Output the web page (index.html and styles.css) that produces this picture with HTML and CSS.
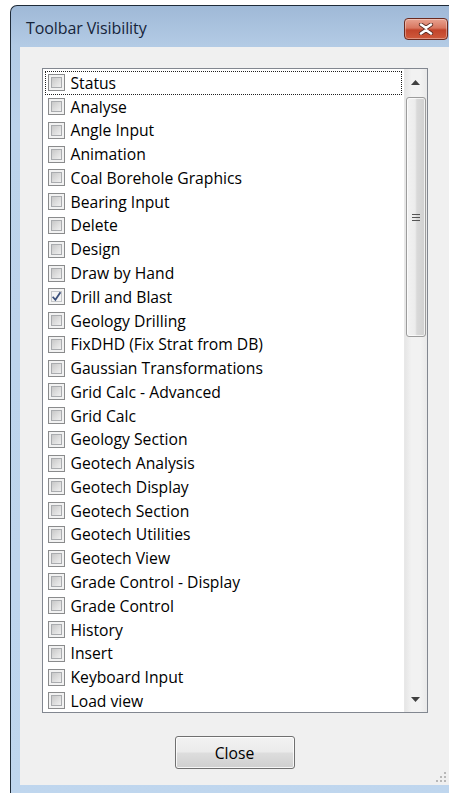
FILE: index.html
```html
<!DOCTYPE html>
<html lang="en">
<head>
<meta charset="utf-8">
<title>Toolbar Visibility</title>
<link rel="stylesheet" href="styles.css">
</head>
<body>
<div class="window">
  <div class="titlebar">
    <span class="title">Toolbar Visibility</span>
    <button class="close-x" aria-label="Close">
      <svg width="20" height="12" viewBox="0 0 20 12">
        <path d="M5 1.5 L10 5 L15 1.5 M5 10.5 L10 7 L15 10.5" fill="none" stroke="#5a2a22" stroke-width="4.2" stroke-linecap="round"/>
        <path d="M5 1.5 L10 5 L15 1.5 M5 10.5 L10 7 L15 10.5" fill="none" stroke="#ffffff" stroke-width="2.6" stroke-linecap="round"/>
      </svg>
    </button>
  </div>
  <div class="client">
    <div class="listbox">
      <ul class="items">
        <li class="item focus"><span class="check"></span>Status</li>
        <li class="item"><span class="check"></span>Analyse</li>
        <li class="item"><span class="check"></span>Angle Input</li>
        <li class="item"><span class="check"></span>Animation</li>
        <li class="item"><span class="check"></span>Coal Borehole Graphics</li>
        <li class="item"><span class="check"></span>Bearing Input</li>
        <li class="item"><span class="check"></span>Delete</li>
        <li class="item"><span class="check"></span>Design</li>
        <li class="item"><span class="check"></span>Draw by Hand</li>
        <li class="item"><span class="check checked"><svg width="11" height="11" viewBox="0 0 10 10"><path d="M1.5 5.2 L4 8 L8.6 1.2" fill="none" stroke="#3b4f7a" stroke-width="1.6"/></svg></span>Drill and Blast</li>
        <li class="item"><span class="check"></span>Geology Drilling</li>
        <li class="item"><span class="check"></span>FixDHD (Fix Strat from DB)</li>
        <li class="item"><span class="check"></span>Gaussian Transformations</li>
        <li class="item"><span class="check"></span>Grid Calc - Advanced</li>
        <li class="item"><span class="check"></span>Grid Calc</li>
        <li class="item"><span class="check"></span>Geology Section</li>
        <li class="item"><span class="check"></span>Geotech Analysis</li>
        <li class="item"><span class="check"></span>Geotech Display</li>
        <li class="item"><span class="check"></span>Geotech Section</li>
        <li class="item"><span class="check"></span>Geotech Utilities</li>
        <li class="item"><span class="check"></span>Geotech View</li>
        <li class="item"><span class="check"></span>Grade Control - Display</li>
        <li class="item"><span class="check"></span>Grade Control</li>
        <li class="item"><span class="check"></span>History</li>
        <li class="item"><span class="check"></span>Insert</li>
        <li class="item"><span class="check"></span>Keyboard Input</li>
        <li class="item"><span class="check"></span>Load view</li>
      </ul>
      <div class="scrollbar">
        <div class="arrow">
          <svg width="9" height="5" viewBox="0 0 9 5"><path d="M0 5 L4.5 0 L9 5 Z" fill="#404040"/></svg>
        </div>
        <div class="track">
          <div class="thumb">
            <span class="grip"></span>
          </div>
        </div>
        <div class="arrow">
          <svg width="9" height="5" viewBox="0 0 9 5"><path d="M0 0 L9 0 L4.5 5 Z" fill="#404040"/></svg>
        </div>
      </div>
    </div>
    <div class="actions">
      <button class="btn">Close</button>
    </div>
    <svg class="sizegrip" width="12" height="12" viewBox="0 0 12 12">
      <g fill="#b8b8b8">
        <rect x="9" y="1" width="2" height="2"/>
        <rect x="5" y="5" width="2" height="2"/><rect x="9" y="5" width="2" height="2"/>
        <rect x="1" y="9" width="2" height="2"/><rect x="5" y="9" width="2" height="2"/><rect x="9" y="9" width="2" height="2"/>
      </g>
    </svg>
  </div>
</div>
</body>
</html>
```

FILE: styles.css
```css
html, body {
  margin: 0;
  padding: 0;
  background: #ffffff;
  overflow: hidden;
  height: 793px;
}

.window {
  margin: 5px 0 0 10px;
  width: 450px;
  height: 800px;
  border-left: 1px solid #1f2b38;
  border-top: 1px solid #1f2b38;
  border-top-left-radius: 7px;
  background: linear-gradient(to bottom, #9fb9d7 0px, #b3cbe5 40px, #bcd3eb 120px, #bfd6ee 100%);
  box-sizing: border-box;
  padding-left: 9px;
}

.titlebar {
  height: 41px;
  display: flex;
  align-items: center;
  justify-content: space-between;
}

.title {
  font-family: "Open Sans", "Noto Sans", sans-serif;
  font-size: 16px;
  color: #16243a;
  margin-left: 6px;
  margin-top: 3px;
  letter-spacing: -0.1px;
}

.close-x {
  width: 44px;
  height: 22px;
  margin-right: 12px;
  margin-top: 4px;
  padding: 0;
  border: 1px solid #6b2b20;
  border-radius: 4px;
  background: linear-gradient(to bottom, #e8a391 0%, #d8765f 45%, #c2442b 55%, #cf5a3c 100%);
  box-shadow: inset 0 0 0 1px rgba(255, 255, 255, 0.35);
  display: flex;
  align-items: center;
  justify-content: center;
}

.client {
  position: relative;
  width: 429px;
  height: 738px;
  background: #f0f0f0;
  display: flex;
  flex-direction: column;
  align-items: center;
  padding-top: 21px;
  box-sizing: border-box;
}

.listbox {
  width: 386px;
  height: 645px;
  border: 1px solid #828790;
  background: #ffffff;
  box-sizing: border-box;
  display: flex;
}

.items {
  list-style: none;
  margin: 0;
  padding: 2px 2px 0 2px;
  flex: 1;
  overflow: hidden;
}

.item {
  height: 23.77px;
  box-sizing: border-box;
  display: flex;
  align-items: center;
  padding-left: 2px;
  font-family: "Open Sans", "Noto Sans", sans-serif;
  font-size: 15.7px;
  color: #000000;
  border: 1px dotted transparent;
  white-space: nowrap;
}

.item.focus {
  border-color: #202020;
}

.check {
  width: 17px;
  height: 17px;
  flex: none;
  box-sizing: border-box;
  margin-right: 6px;
  border: 1px solid #8a8b8c;
  background: #f2f2f2;
  display: flex;
  align-items: center;
  justify-content: center;
  position: relative;
}

.check::after {
  content: "";
  position: absolute;
  inset: 2px;
  border: 1px solid #a9abae;
  background: linear-gradient(135deg, #c8c8c8 0%, #dedede 55%, #efefef 100%);
}

.check.checked::after {
  display: none;
}

.check.checked {
  background: #f4f4f4;
  box-shadow: inset 0 0 0 2px #f4f4f4, inset 0 0 0 3px #c4c6c9;
}

.scrollbar {
  width: 23px;
  flex: none;
  display: flex;
  flex-direction: column;
  background: linear-gradient(to right, #e6e6e6, #f2f2f2 30%, #f2f2f2 70%, #e9e9e9);
  border-left: 1px solid #e8e8e8;
  box-sizing: border-box;
}

.arrow {
  height: 26px;
  flex: none;
  display: flex;
  align-items: center;
  justify-content: center;
}

.track {
  flex: 1;
  padding: 2px 1px 0 1px;
}

.thumb {
  height: 240px;
  box-sizing: border-box;
  border: 1px solid #9c9c9c;
  border-radius: 3px;
  background: linear-gradient(to right, #f2f2f2 0%, #ececec 45%, #d9d9d9 55%, #d0d0d0 100%);
  box-shadow: inset 0 0 0 1px rgba(255, 255, 255, 0.7);
  display: flex;
  align-items: center;
  justify-content: center;
}

.grip {
  width: 8px;
  height: 7px;
  background: linear-gradient(to bottom,
    #555 0, #555 1px, transparent 1px, transparent 3px,
    #555 3px, #555 4px, transparent 4px, transparent 6px,
    #555 6px, #555 7px);
}

.actions {
  margin-top: 23px;
  display: flex;
  justify-content: center;
}

.btn {
  width: 120px;
  height: 33px;
  box-sizing: border-box;
  border: 1px solid #707070;
  border-radius: 3px;
  background: linear-gradient(to bottom, #f2f2f2 0%, #ebebeb 48%, #dddddd 52%, #cfcfcf 100%);
  box-shadow: inset 0 0 0 1px rgba(255, 255, 255, 0.8);
  font-family: "Open Sans", "Noto Sans", sans-serif;
  font-size: 15.7px;
  color: #000000;
  padding: 0;
}

.sizegrip {
  position: absolute;
  right: 2px;
  bottom: 2px;
}
```
